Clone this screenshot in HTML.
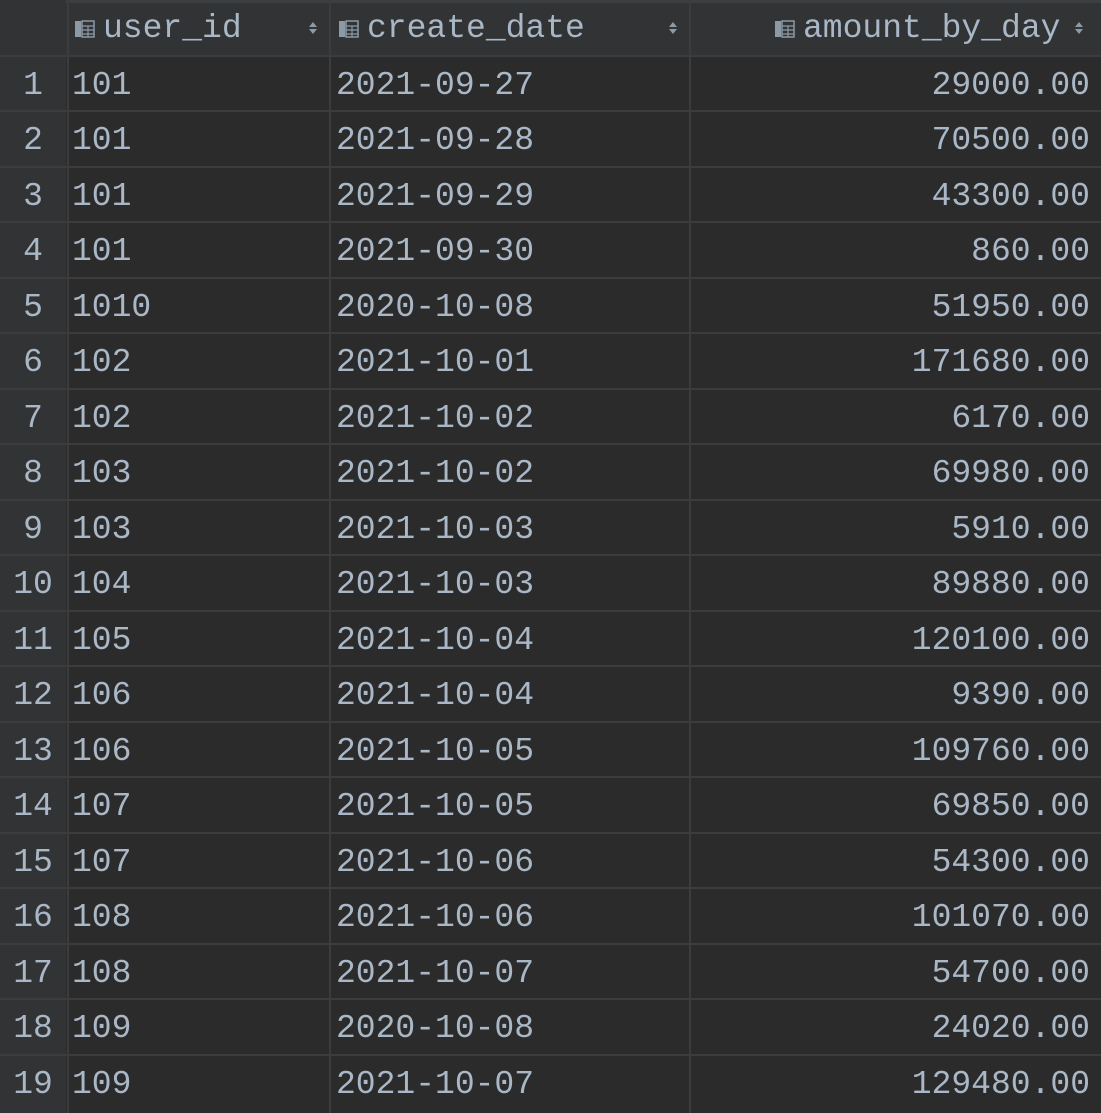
<!DOCTYPE html><html><head><style>
body{margin:0;width:1101px;height:1113px;background:#2b2b2b;overflow:hidden;font-family:"Liberation Mono","DejaVu Sans Mono",monospace;color:#a9b7c6}
.hdr{position:absolute;top:0;left:0;width:1101px;height:55px;background:#313335;border-top:3px solid #3c3f41;box-sizing:border-box}
.gut{position:absolute;top:0;left:0;width:66px;height:1113px;background:#313335}
.c{position:absolute;font-size:33px;line-height:55.5px;height:55.5px;white-space:pre;margin-top:2px}
.vl{position:absolute;top:0;width:2px;height:1113px;background:#3a3c3e}
.hl{position:absolute;left:0;width:1101px;height:2px;background:#3a3c3e}
.ic{display:inline-block;width:20px;height:18px;vertical-align:-1px;margin-right:8px;position:relative}
.ic svg{position:absolute;left:0;top:0}
.srt{position:absolute;top:21px}
</style></head><body>
<div class="hdr"></div><div class="gut"></div>
<div class="vl" style="left:67px"></div><div class="vl" style="left:329px"></div><div class="vl" style="left:689px"></div>
<div id="g"></div>
<div class="c" style="left:75px;top:0;margin-top:1px"><span class="ic"><svg width="20" height="18"><rect x="0" y="1" width="6" height="16" fill="#8c9aa6"/><rect x="7" y="1" width="12" height="16" fill="none" stroke="#8c9aa6" stroke-width="1.5"/><path d="M7 6H19M7 10H19M7 14H19M13 6V17" stroke="#8c9aa6" stroke-width="1.2"/></svg></span>user_id</div>
<svg class="srt" style="left:308px" width="10" height="14"><path d="M1 6L5 1L9 6ZM1 8L5 13L9 8Z" fill="#8c9aa6"/></svg>
<div class="c" style="left:339px;top:0;margin-top:1px"><span class="ic"><svg width="20" height="18"><rect x="0" y="1" width="6" height="16" fill="#8c9aa6"/><rect x="7" y="1" width="12" height="16" fill="none" stroke="#8c9aa6" stroke-width="1.5"/><path d="M7 6H19M7 10H19M7 14H19M13 6V17" stroke="#8c9aa6" stroke-width="1.2"/></svg></span>create_date</div>
<svg class="srt" style="left:668px" width="10" height="14"><path d="M1 6L5 1L9 6ZM1 8L5 13L9 8Z" fill="#8c9aa6"/></svg>
<div class="c" style="left:775px;top:0;margin-top:1px"><span class="ic"><svg width="20" height="18"><rect x="0" y="1" width="6" height="16" fill="#8c9aa6"/><rect x="7" y="1" width="12" height="16" fill="none" stroke="#8c9aa6" stroke-width="1.5"/><path d="M7 6H19M7 10H19M7 14H19M13 6V17" stroke="#8c9aa6" stroke-width="1.2"/></svg></span>amount_by_day</div>
<svg class="srt" style="left:1074px" width="10" height="14"><path d="M1 6L5 1L9 6ZM1 8L5 13L9 8Z" fill="#8c9aa6"/></svg>
<script>
var d=[["101","2021-09-27","29000.00"],["101","2021-09-28","70500.00"],["101","2021-09-29","43300.00"],["101","2021-09-30","860.00"],["1010","2020-10-08","51950.00"],["102","2021-10-01","171680.00"],["102","2021-10-02","6170.00"],["103","2021-10-02","69980.00"],["103","2021-10-03","5910.00"],["104","2021-10-03","89880.00"],["105","2021-10-04","120100.00"],["106","2021-10-04","9390.00"],["106","2021-10-05","109760.00"],["107","2021-10-05","69850.00"],["107","2021-10-06","54300.00"],["108","2021-10-06","101070.00"],["108","2021-10-07","54700.00"],["109","2020-10-08","24020.00"],["109","2021-10-07","129480.00"]];
var h="";
for(var i=0;i<19;i++){var t=55.5+i*55.5;
h+='<div class="hl" style="top:'+(t-1)+'px"></div>';
h+='<div class="c" style="left:0;width:66px;text-align:center;top:'+t+'px">'+(i+1)+'</div>';
h+='<div class="c" style="left:72px;top:'+t+'px">'+d[i][0]+'</div>';
h+='<div class="c" style="left:336px;top:'+t+'px">'+d[i][1]+'</div>';
h+='<div class="c" style="right:11px;text-align:right;top:'+t+'px">'+d[i][2]+'</div>';}
document.getElementById("g").innerHTML=h;
</script>
</body></html>
